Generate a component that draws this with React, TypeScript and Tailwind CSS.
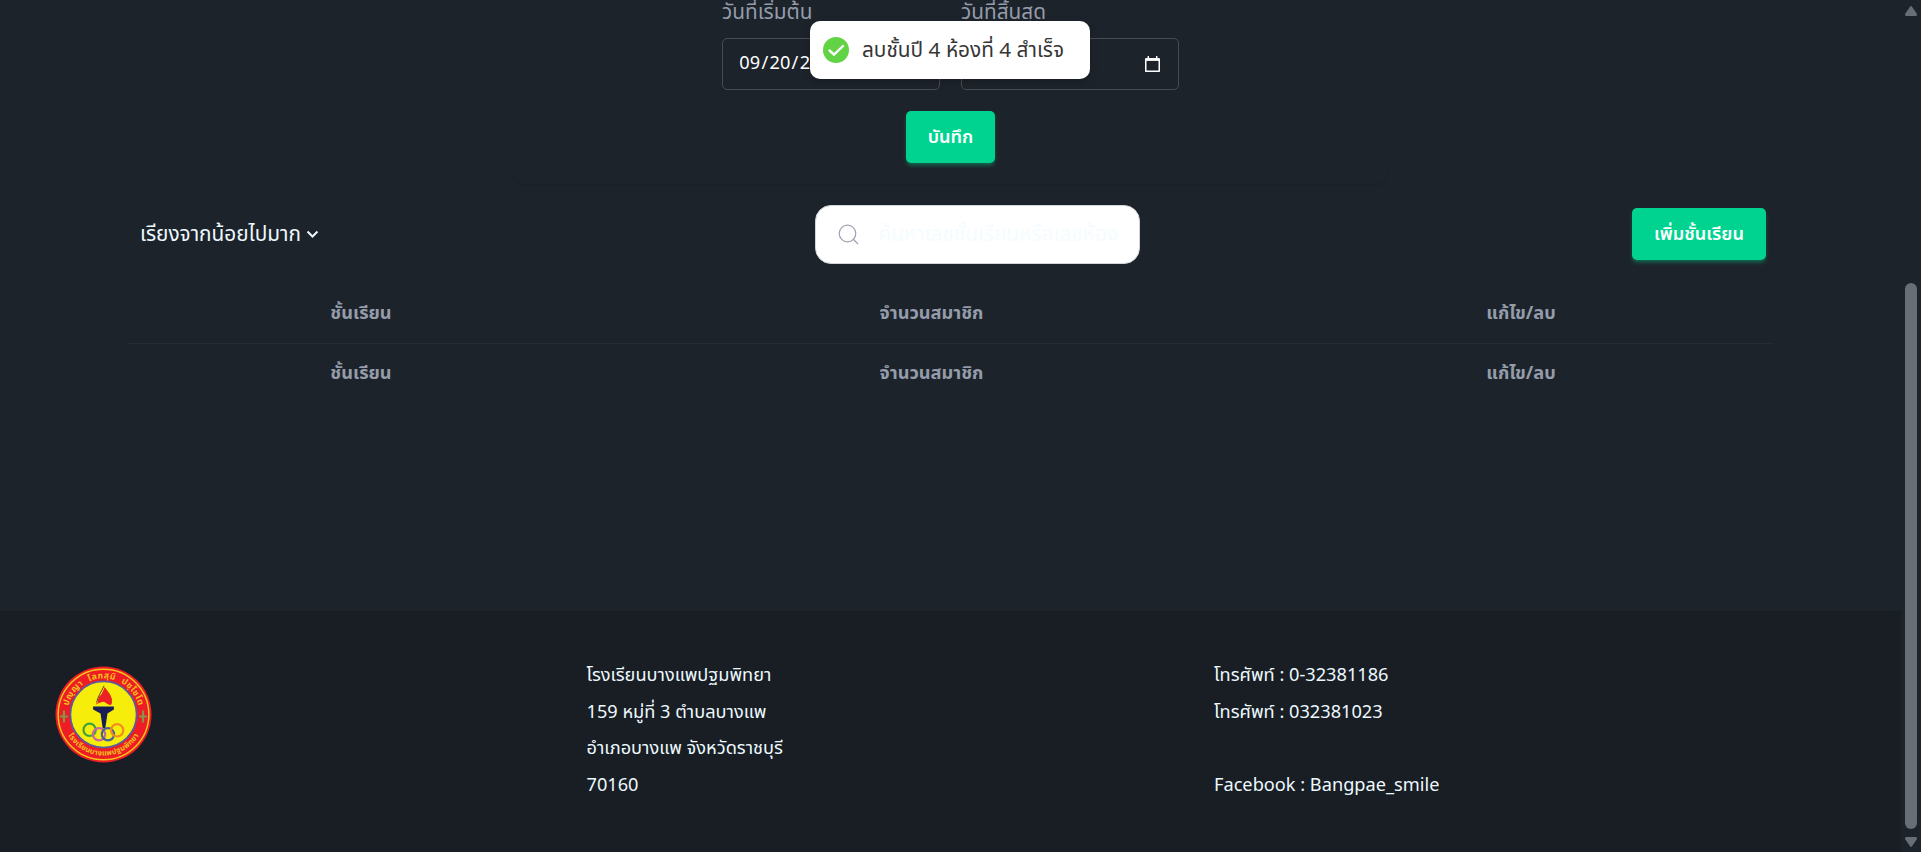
import React from "react";

const columns = ["ชั้นเรียน", "จำนวนสมาชิก", "แก้ไข/ลบ"];

function DateField({ label, parts }: { label: string; parts: string[] }) {
  return (
    <div className="w-[218px]">
      <div className="h-6 whitespace-nowrap text-[20.800px] leading-[26px] text-[#949caa]">{label}</div>
      <div className="mt-[14px] flex h-[52px] items-center justify-between rounded-[5px] border border-[#474c53] pl-[15px] pr-[18px] text-[18.200px] text-white">
        <div className="flex">
          {parts.map((part, i) => (
            <span key={part} className="flex">
              {i > 0 && <span>/</span>}
              <span className="px-[1.300px]">{part}</span>
            </span>
          ))}
        </div>
        <svg width="15" height="16" viewBox="0 0 15 16" fill="none">
          <path d="M.75 3h13.500v12.250H.75z" stroke="#fff" strokeWidth="1.500" strokeLinejoin="round" />
          <path d="M.75 3.500h13.500" stroke="#fff" strokeWidth="2.800" />
          <path d="M3.300 0v3M11.700 0v3" stroke="#fff" strokeWidth="1.500" />
        </svg>
      </div>
    </div>
  );
}

function Emblem() {
  return (
    <svg width="97" height="97" viewBox="0 0 98 98">
      <defs>
        <path id="arcTop" d="M12.500 49a36.500 36.500 0 0 1 73 0" />
        <path id="arcBottom" d="M7.500 49a41.500 41.500 0 0 0 83 0" />
      </defs>
      <circle cx="49" cy="49" r="48.5" fill="#ee1c24" />
      <circle cx="49" cy="49" r="45.8" fill="none" stroke="#f5c61a" strokeWidth="1.5" />
      <circle cx="49" cy="49" r="33.5" fill="#f6ed0b" stroke="#5a5a9e" strokeWidth="1.8" />
      <g fill="#f3c01c" fontWeight="700" fontFamily="'Noto Sans Thai','Noto Sans',sans-serif" textAnchor="middle">
        <text fontSize="8.800" wordSpacing="3" letterSpacing="0.5"><textPath href="#arcTop" startOffset="50%">ปญฺญา โลกสฺมิ ปชฺโชโต</textPath></text>
        <text fontSize="7.600" letterSpacing="0.2"><textPath href="#arcBottom" startOffset="50%">โรงเรียนบางแพปฐมพิทยา</textPath></text>
      </g>
      <path d="M9 45v12M5 51h8M89 45v12M85 51h8" stroke="#879447" strokeWidth="2.200" />
      <path d="M49.500 20c2 4 7 8 8 13.500 0 3 .5 5-1.500 6-3-.5-4-2.500-6.500-3.500-3 0-6 1.500-8 3 0-4 .5-6 4-9 3-3 4-6 4-10Z" fill="#ed2024" />
      <path d="M41.500 38c0-8 4-12 8-18" stroke="#f6ed0b" strokeWidth="3" fill="none" />
      <path d="M42 37c1-6 5-11 7.500-17" stroke="#4b2730" strokeWidth=".9" fill="none" />
      <path d="M38.500 41h21v3l-6.500 4-2.200 15h-2.600L46 48l-7.500-4z" fill="#1b1d55" />
      <g fill="none" strokeWidth="2.200">
        <circle cx="35" cy="64.500" r="6.200" stroke="#3ca23c" />
        <circle cx="44.500" cy="69" r="6.200" stroke="#ca65a0" />
        <circle cx="53.500" cy="69" r="6.200" stroke="#476397" />
        <circle cx="62.800" cy="65" r="6.200" stroke="#f38b20" />
      </g>
    </svg>
  );
}

export default function App() {
  return (
    <div className="relative flex h-[852px] w-[1921px] overflow-hidden bg-[#1d232a] font-['Noto_Sans_Thai','Noto_Sans','Noto_Sans_Thai_Looped',sans-serif] text-[#ecf9ff]">
      <div className="flex w-[1901px] flex-col">
        <main className="flex h-[611px] flex-col items-center">
          <section className="flex h-[184px] w-[875px] flex-col items-center rounded-b-[13px] shadow-[0_1px_2px_rgba(0,0,0,0.1)]">
            <div className="flex gap-[21px]">
              <DateField label="วันที่เริ่มต้น" parts={["09", "20", "2023"]} />
              <DateField label="วันที่สิ้นสุด" parts={[]} />
            </div>
            <button className="mt-[21px] h-[52px] w-[89px] rounded-[5px] bg-[#00d390] pt-[2px] text-[18.200px] font-semibold text-white shadow-[0_3px_4px_-1px_rgba(0,211,144,0.45)]">บันทึก</button>
          </section>
          <div className="mt-[21px] flex h-[59px] w-[1645px] items-center justify-between pl-[12px] pr-[7px]">
            <div className="flex w-[457px] items-center gap-[5px] text-[20.800px]">
              <span className="whitespace-nowrap">เรียงจากน้อยไปมาก</span>
              <svg width="13" height="9" viewBox="0 0 13 9" fill="none"><path d="m1.500 1.500 5 5 5-5" stroke="currentColor" strokeWidth="2" /></svg>
            </div>
            <div className="flex h-[59px] w-[325px] items-center rounded-2xl border border-[#d1d5db] bg-white pl-[22px]">
              <svg className="-mt-px" width="21" height="21" viewBox="0 0 21 21" fill="none" stroke="#9ca3af" strokeWidth="1.200"><circle cx="9.500" cy="9.500" r="8.300" /><path d="m15 15 5 5" /></svg>
              <span className="ml-[20px] whitespace-nowrap text-[20.800px] text-[#f4fcff]">ค้นหาเลขชั้นเรียนหรือเลขห้อง</span>
            </div>
            <div className="flex h-[53px] w-[409px] items-start justify-end">
              <button className="h-[52px] w-[134px] rounded-[5px] bg-[#00d390] pt-[2px] text-[18.200px] font-semibold text-white shadow-[0_3px_4px_-1px_rgba(0,211,144,0.45)]">เพิ่มชั้นเรียน</button>
            </div>
          </div>
          <table className="mt-[19px] w-[1645px] table-fixed border-collapse text-center text-[18.200px] font-bold text-[#949caa]">
            <colgroup><col className="w-[466px]" /><col className="w-[675px]" /><col className="w-[504px]" /></colgroup>
            <tbody>
              {[0, 1].map((row) => (
                <tr key={row} className={row === 0 ? "h-[60px] border-b border-[#262b33]" : "h-[58px]"}>
                  {columns.map((c) => <td key={c} className="p-0 pt-[2px]">{c}</td>)}
                </tr>
              ))}
            </tbody>
          </table>
        </main>
        <footer className="flex h-[241px] bg-[#191e24] text-[18.200px] leading-[36.600px]">
          <div className="w-[586.500px] pl-[55px] pt-[55px]"><Emblem /></div>
          <div className="w-[627.500px] pt-[47px]">
            <p>โรงเรียนบางแพปฐมพิทยา</p>
            <p>159 หมู่ที่ 3 ตำบลบางแพ</p>
            <p>อำเภอบางแพ จังหวัดราชบุรี</p>
            <p>70160</p>
          </div>
          <div className="pt-[47px]">
            <p>โทรศัพท์ : 0-32381186</p>
            <p>โทรศัพท์ : 032381023</p>
            <p>&nbsp;</p>
            <p>Facebook : Bangpae_smile</p>
          </div>
        </footer>
      </div>
      <div className="flex w-5 flex-col items-center pt-[6px]">
        <svg className="shrink-0" width="12" height="10" viewBox="0 0 12 10"><path d="M5 .7Q6-.5 7 .7L12 8q0 2-1 2H1Q0 10 0 8Z" fill="#686e75" /></svg>
        <div className="mt-[267px] h-[546px] w-3 shrink-0 rounded-full bg-[#686e75]" />
        <svg className="mt-2 shrink-0" width="12" height="10" viewBox="0 0 12 10"><path d="M5 9.300Q6 10.500 7 9.300L12 2q0-2-1-2H1Q0 0 0 2Z" fill="#686e75" /></svg>
      </div>
      <div className="absolute left-[810px] top-[21px] flex h-[58px] w-[280px] items-center rounded-[10px] bg-white pl-[13px] text-[20.800px] text-[#363636] shadow-[0_3px_10px_rgba(0,0,0,0.1),0_3px_3px_rgba(0,0,0,0.05)]">
        <svg width="26" height="26" viewBox="0 0 26 26" fill="none"><circle cx="13" cy="13" r="13" fill="#61d345" /><path d="m6.500 13.500 4.500 4 9-8.500" stroke="#fff" strokeWidth="2.400" strokeLinecap="round" /></svg>
        <span className="ml-[13px] whitespace-nowrap pt-[2px]">ลบชั้นปี 4 ห้องที่ 4 สำเร็จ</span>
      </div>
    </div>
  );
}
